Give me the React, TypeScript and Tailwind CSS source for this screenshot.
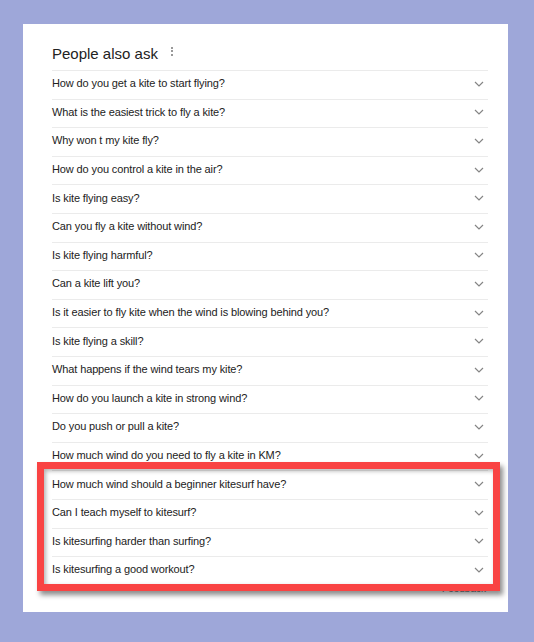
const questions = [
  "How do you get a kite to start flying?",
  "What is the easiest trick to fly a kite?",
  "Why won t my kite fly?",
  "How do you control a kite in the air?",
  "Is kite flying easy?",
  "Can you fly a kite without wind?",
  "Is kite flying harmful?",
  "Can a kite lift you?",
  "Is it easier to fly kite when the wind is blowing behind you?",
  "Is kite flying a skill?",
  "What happens if the wind tears my kite?",
  "How do you launch a kite in strong wind?",
  "Do you push or pull a kite?",
  "How much wind do you need to fly a kite in KM?",
  "How much wind should a beginner kitesurf have?",
  "Can I teach myself to kitesurf?",
  "Is kitesurfing harder than surfing?",
  "Is kitesurfing a good workout?",
];

function Chevron() {
  return (
    <svg width="10" height="6" viewBox="0 0 10 6" className="mr-[4px] shrink-0" aria-hidden="true">
      <path d="M1 1l4 4 4-4" fill="none" stroke="#858585" strokeWidth="1.2" />
    </svg>
  );
}

export default function App() {
  return (
    <div className="h-[642px] w-[534px] bg-[#9ea7d9] pl-[23px] pt-[24px] font-['Liberation_Sans',Arial,sans-serif]">
      <div className="relative h-[588px] w-[485px] bg-white pl-[29px] pr-[20px]">
        {/* heading */}
        <div className="flex h-[46px] items-start pt-[19.5px]">
          <h2 className="text-[15px] leading-[20px] text-[#222]">People also ask</h2>
          <span className="ml-[13px] mt-[3px] flex flex-col gap-[1.5px]" aria-hidden="true">
            <span className="h-[2px] w-[2px] bg-[#999]" />
            <span className="h-[2px] w-[2px] bg-[#999]" />
            <span className="h-[2px] w-[2px] bg-[#999]" />
          </span>
        </div>

        {/* questions */}
        <div className="flex flex-col">
          {questions.map((q) => (
            <div
              key={q}
              className="flex h-[28.6px] items-center justify-between border-t border-[#ebebeb] pb-[2px]"
            >
              <span className="text-[11px] leading-[13px] tracking-[-0.12px] text-[#222]">{q}</span>
              <Chevron />
            </div>
          ))}
        </div>

        <div className="-mt-[2px] flex justify-end pr-[2px]">
          <span className="text-[10px] leading-[12px] text-[#70757a]">Feedback</span>
        </div>

        {/* highlight overlay */}
        <div className="absolute left-[14px] top-[438px] h-[129px] w-[463px] border-[7px] border-[#f94343] shadow-[3px_4px_5px_rgba(0,0,0,0.45),inset_2px_2px_4px_rgba(0,0,0,0.3)]" />
      </div>
    </div>
  );
}
